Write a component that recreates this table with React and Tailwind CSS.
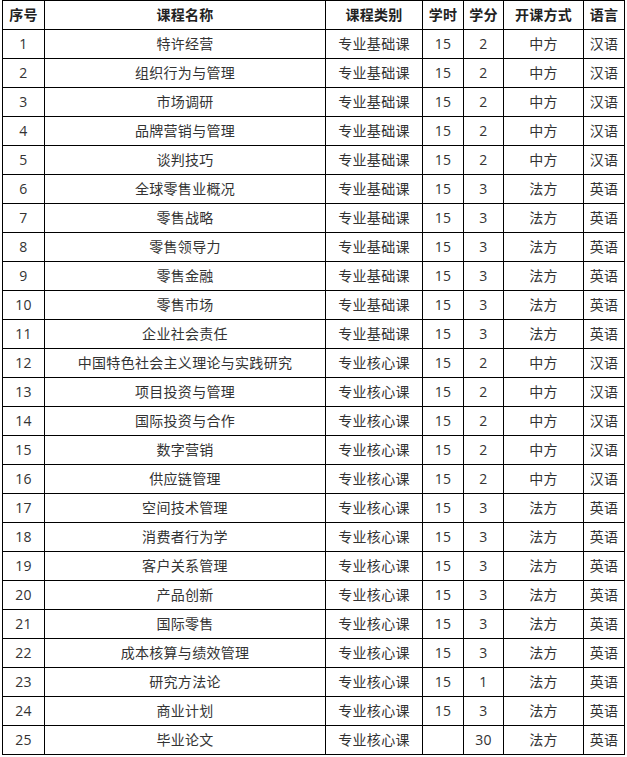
import React from 'react';

const rows = [
  ['1', '特许经营', '专业基础课', '15', '2', '中方', '汉语'],
  ['2', '组织行为与管理', '专业基础课', '15', '2', '中方', '汉语'],
  ['3', '市场调研', '专业基础课', '15', '2', '中方', '汉语'],
  ['4', '品牌营销与管理', '专业基础课', '15', '2', '中方', '汉语'],
  ['5', '谈判技巧', '专业基础课', '15', '2', '中方', '汉语'],
  ['6', '全球零售业概况', '专业基础课', '15', '3', '法方', '英语'],
  ['7', '零售战略', '专业基础课', '15', '3', '法方', '英语'],
  ['8', '零售领导力', '专业基础课', '15', '3', '法方', '英语'],
  ['9', '零售金融', '专业基础课', '15', '3', '法方', '英语'],
  ['10', '零售市场', '专业基础课', '15', '3', '法方', '英语'],
  ['11', '企业社会责任', '专业基础课', '15', '3', '法方', '英语'],
  ['12', '中国特色社会主义理论与实践研究', '专业核心课', '15', '2', '中方', '汉语'],
  ['13', '项目投资与管理', '专业核心课', '15', '2', '中方', '汉语'],
  ['14', '国际投资与合作', '专业核心课', '15', '2', '中方', '汉语'],
  ['15', '数字营销', '专业核心课', '15', '2', '中方', '汉语'],
  ['16', '供应链管理', '专业核心课', '15', '2', '中方', '汉语'],
  ['17', '空间技术管理', '专业核心课', '15', '3', '法方', '英语'],
  ['18', '消费者行为学', '专业核心课', '15', '3', '法方', '英语'],
  ['19', '客户关系管理', '专业核心课', '15', '3', '法方', '英语'],
  ['20', '产品创新', '专业核心课', '15', '3', '法方', '英语'],
  ['21', '国际零售', '专业核心课', '15', '3', '法方', '英语'],
  ['22', '成本核算与绩效管理', '专业核心课', '15', '3', '法方', '英语'],
  ['23', '研究方法论', '专业核心课', '15', '1', '法方', '英语'],
  ['24', '商业计划', '专业核心课', '15', '3', '法方', '英语'],
  ['25', '毕业论文', '专业核心课', '', '30', '法方', '英语'],
];

const headers = ['序号', '课程名称', '课程类别', '学时', '学分', '开课方式', '语言'];
const widths = ['w-[42px]', 'w-[281px]', 'w-[97px]', 'w-[41px]', 'w-[40px]', 'w-[80px]', 'w-[41px]'];

export default function App() {
  return (
    <div className="w-[627px] h-[757px] bg-white pl-[2px]" style={{ fontFamily: '"Open Sans", "Noto Sans CJK SC", sans-serif' }}>
      <table className="table-fixed border-collapse w-[623px] text-[14px] text-[#333] tracking-[0.3px]">
        <colgroup>
          {widths.map((w, i) => (
            <col key={i} className={w} />
          ))}
        </colgroup>
        <thead>
          <tr>
            {headers.map((h) => (
              <th key={h} className="h-[29px] p-0 border border-black text-center font-bold text-[#222] leading-none">
                {h}
              </th>
            ))}
          </tr>
        </thead>
        <tbody>
          {rows.map((r) => (
            <tr key={r[0]}>
              {r.map((c, i) => (
                <td key={i} className="h-[29px] p-0 border border-black text-center leading-none">
                  {c}
                </td>
              ))}
            </tr>
          ))}
        </tbody>
      </table>
    </div>
  );
}
